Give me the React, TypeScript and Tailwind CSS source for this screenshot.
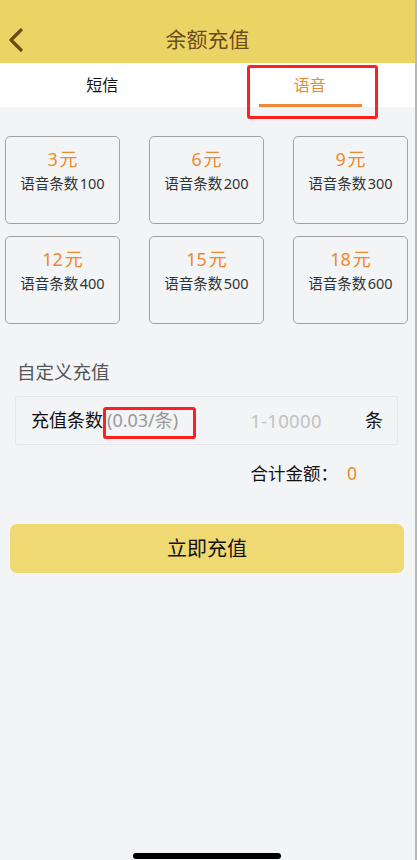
import React, { useState } from 'react'

const packs = [
  { price: 3, count: 100 },
  { price: 6, count: 200 },
  { price: 9, count: 300 },
  { price: 12, count: 400 },
  { price: 15, count: 500 },
  { price: 18, count: 600 },
]

const font = { fontFamily: '"Noto Sans", "Noto Sans CJK SC", sans-serif' }

export default function App() {
  const [tab, setTab] = useState(1)
  const [count, setCount] = useState('')
  const total = count ? (Number(count) * 0.03).toFixed(2) : '0'

  return (
    <div style={font} className="relative w-[417px] h-[860px] bg-gray-100 border-r-2 border-[#b8b8b8] overflow-hidden">
      {/* header */}
      <div className="relative h-[63px] bg-[#ecd464] flex items-end justify-center pb-[11px]">
        <button className="absolute left-[8px] top-[28px]">
          <svg width="16" height="24" viewBox="0 0 16 24" fill="none">
            <path d="M13 2 L3 12 L13 22" stroke="#6b4a1c" strokeWidth="3.2" strokeLinecap="round" strokeLinejoin="round" />
          </svg>
        </button>
        <h1 className="text-[21px] leading-[26px] text-[#6b4c1c]">余额充值</h1>
      </div>

      {/* tabs */}
      <div className="relative h-[44px] bg-white flex">
        {['短信', '语音'].map((t, i) => (
          <button
            key={t}
            onClick={() => setTab(i)}
            className={`flex-1 relative flex items-center justify-center text-[16px] pr-[3px] ${tab === i ? 'text-[#ee8a2a]' : 'text-[#111]'}`}>
            {t}
            {tab === i && (
              <span className="absolute bottom-0 left-[51px] w-[103px] h-[3px] bg-[#ec8a38]" />
            )}
          </button>
        ))}
        <div className="absolute left-[247px] top-[2px] w-[131px] h-[54px] border-[3px] border-[#ff1f1f] rounded-[3px] pointer-events-none" />
      </div>

      {/* packages */}
      <div className="grid grid-cols-3 gap-x-[29px] gap-y-[12px] pl-[5px] pr-[7px] pt-[29px]">
        {packs.map((p) => (
          <div key={p.price} className="h-[88px] rounded-[5px] border border-[#a3a3a3] flex flex-col items-center pt-[10px]">
            <span className="text-[18px] leading-[24px] text-[#ee8a2a]">{p.price}&#8202;元</span>
            <span className="text-[14.5px] leading-[22px] text-[#333] mt-[1px]">语音条数&#8202;{p.count}</span>
          </div>
        ))}
      </div>

      {/* custom */}
      <div className="pl-[17px] pt-[36px] text-[18.5px] leading-[24px] text-[#555]">自定义充值</div>
      <div className="relative ml-[15px] mr-[17px] mt-[12px] h-[49px] border border-[#e7e7e9] rounded-[2px] flex items-center pl-[15px] pr-[14px]">
        <span className="text-[18px] text-[#111]">充值条数</span>
        <span className="text-[18px] text-[#999] ml-[4px]">(0.03/条)</span>
        <input
          value={count}
          onChange={(e) => setCount(e.target.value)}
          placeholder="1-10000"
          className="ml-[72px] w-[96px] bg-transparent text-[18.5px] tracking-[0.3px] text-[#333] placeholder:text-[#c2c2c2] outline-none"
        />
        <span className="ml-auto text-[18px] text-[#111]">条</span>
        <div className="absolute left-[87px] top-[10px] w-[93px] h-[32px] border-[3px] border-[#ff1f1f] rounded-[3px] pointer-events-none" />
      </div>
      <div className="flex justify-end items-center pr-[58px] pt-[16px] text-[17.5px] leading-[24px]">
        <span className="text-[#111]">合计金额：</span>
        <span className="text-[#ee8a2a] ml-[9px]">{total}</span>
      </div>

      <div className="pl-[10px] pr-[11px] pt-[39px]">
        <button className="w-full h-[49px] rounded-[7px] bg-[#f0d872] text-[20px] text-[#111]">立即充值</button>
      </div>

      {/* home indicator */}
      <div className="absolute left-[133px] bottom-[1px] w-[148px] h-[6px] rounded-full bg-black" />
    </div>
  )
}
